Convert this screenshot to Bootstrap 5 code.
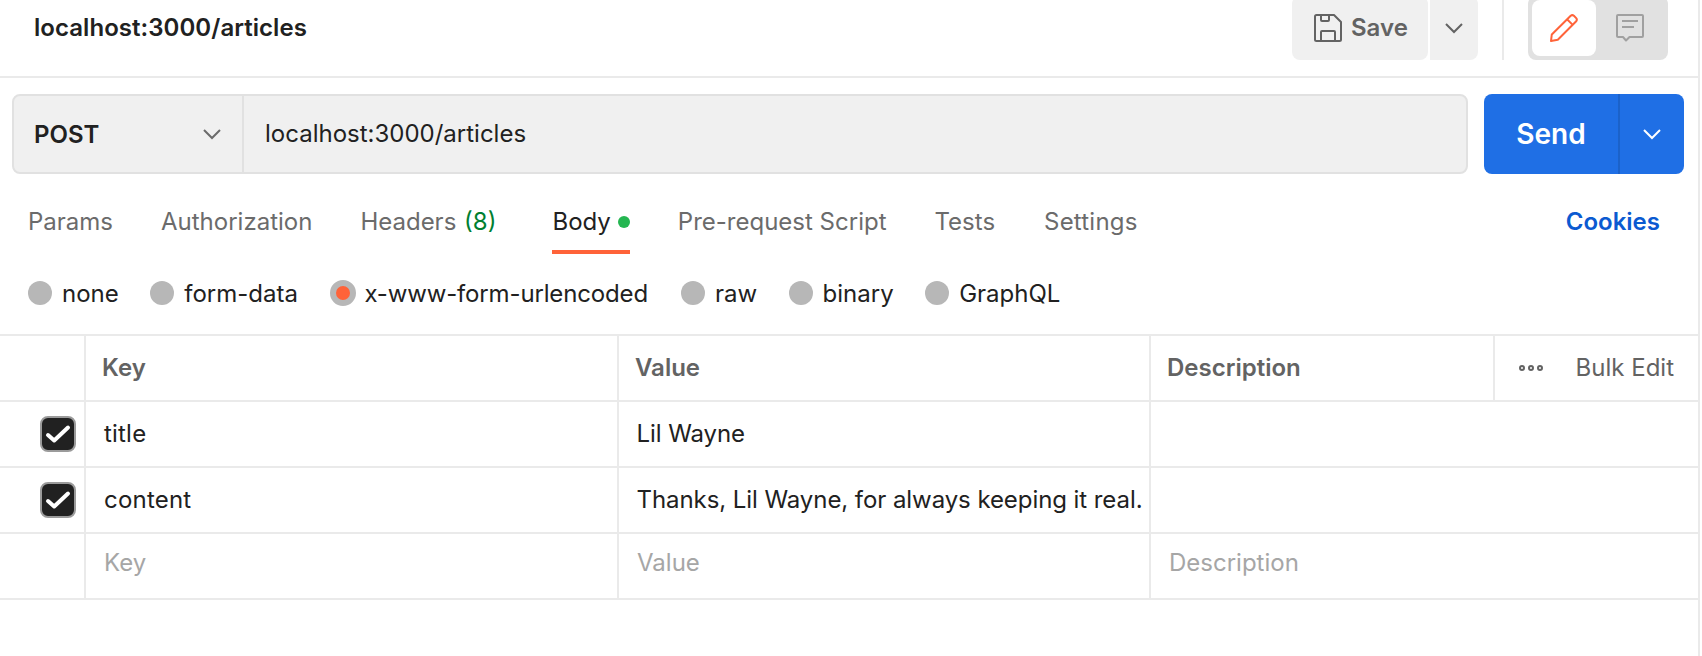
<!DOCTYPE html>
<html lang="en">
<head>
<meta charset="utf-8">
<meta name="viewport" content="width=device-width, initial-scale=1">
<title>localhost:3000/articles</title>
<link rel="stylesheet" href="https://cdn.jsdelivr.net/npm/bootstrap@5.3.0/dist/css/bootstrap.min.css">
<style>
  :root { --line: #eaeaea; --ink: #212121; --muted: #6b6b6b; --faint: #a6a6a6; --accent: #ff6339; }
  body { font-family: Inter, "Liberation Sans", sans-serif; font-size: 24px; line-height: 32px; color: var(--ink); background: #fff; overflow: hidden; }
  svg { display: block; flex: none; fill: none; }
  .pane { width: 1700px; height: 656px; border-right: 2px solid var(--line); }
  .topbar { height: 78px; border-bottom: 2px solid var(--line); padding: 0 30px 0 34px; overflow: hidden; }
  .topbar h1 { font-size: 24px; line-height: 32px; margin-top: 12px; letter-spacing: .05px; }
  .tools { height: 64px; margin-top: -4px; }
  .tool-btn { background: #f0f0f0; border: 0; border-radius: 8px; color: #636363; font-size: 24px; padding: 0; height: 64px; }
  .save-main { width: 136px; padding: 0 0 1px 22px; gap: 9px; border-radius: 8px; }
  .save-more { width: 48px; margin-left: 2px; border-radius: 0 8px 8px 0; }
  .rule { width: 2px; background: var(--line); margin: 0 24px; }
  .switch { width: 140px; background: #e1e1e1; border-radius: 8px; padding: 4px; gap: 2px; }
  .switch > span { width: 64px; height: 56px; border-radius: 8px; }
  .request { padding: 16px 14px 0 12px; gap: 16px; }
  .address { height: 80px; background: #f0f0f0; border: 2px solid #e1e1e1; border-radius: 8px; }
  .method { width: 230px; border-right: 2px solid #e1e1e1; padding: 0 21px 0 20px; }
  .method span { padding-top: 1px; }
  .url { padding: 0 0 0 21px; }
  .send { width: 200px; height: 80px; border-radius: 8px; background: #1f6fe5; color: #fff; font-size: 28px; overflow: hidden; }
  .send-main { width: 134px; }
  .send-more { border-left: 2px solid #1b62ca; }
  .tabs { padding: 32px 38px 0 28px; gap: 48px; height: 80px; color: var(--muted); }
  .tabs a { color: inherit; text-decoration: none; height: 48px; white-space: nowrap; }
  .tabs a.current { color: var(--ink); border-bottom: 4px solid var(--accent); }
  .tabs a.cookies { color: #0b5ad1; }
  .tabs .airy { letter-spacing: .2px; margin-left: 1px; }
  .count { color: #007f31; margin-left: 1px; }
  .dot { width: 12px; height: 12px; border-radius: 50%; background: #24b651; margin: 10px 0 0 7px; }
  .modes { height: 80px; padding: 0 28px 2px; gap: 31.5px; }
  .modes label { gap: 10px; white-space: nowrap; }
  .modes label.wide { gap: 8px; letter-spacing: -.15px; margin: 0 1.5px 0 1px; }
  .modes .caption { padding-top: 1px; }
  .knob { width: 24px; height: 24px; border-radius: 50%; background: #b7b7b7; }
  .knob.on { width: 26px; height: 26px; background: var(--accent); border: 6px solid #b7b7b7; }
  .params { table-layout: fixed; width: 1698px; border-collapse: separate; border-spacing: 0; border-top: 2px solid var(--line); }
  .params th, .params td { height: 66px; padding: 0 0 1px 18px; border-bottom: 2px solid var(--line); border-right: 2px solid var(--line); vertical-align: middle; white-space: nowrap; }
  .params th { color: #636363; font-weight: 600; padding-left: 16px; }
  .params th:last-child, .params td:last-child { border-right: 0; }
  .params .tick { padding: 0 8px 0 0; }
  .params .airy { letter-spacing: .2px; }
  .params .snug { letter-spacing: -.07px; padding-left: 17.5px; }
  .params .blank td { color: var(--faint); padding-bottom: 6px; }
  .check { width: 36px; height: 36px; border: 2px solid #9b9b9b; border-radius: 8px; background: var(--ink); }
</style>
</head>
<body>
<div class="pane">
  <header class="topbar d-flex justify-content-between align-items-start">
    <h1 class="fw-semibold mb-0">localhost:3000/articles</h1>
    <div class="tools d-flex">
      <button class="tool-btn save-main fw-semibold d-flex align-items-center">
        <svg width="28" height="28" viewBox="0 0 28 28" stroke="#636363" stroke-width="2" stroke-linejoin="round"><path d="M1 2.500Q1 1 2.500 1H20l7 7v17.500Q27 27 25.500 27h-23Q1 27 1 25.500zM7 1v5q0 1 1 1h6q1 0 1-1V1M7 27v-9q0-1 1-1h12q1 0 1 1v9"/></svg>
        Save
      </button>
      <button class="tool-btn save-more d-flex align-items-center justify-content-center" aria-label="More save options">
        <svg width="18" height="11" viewBox="0 0 18 11" stroke="#636363" stroke-width="2"><path d="M1 1l8 8 8-8"/></svg>
      </button>
      <div class="rule"></div>
      <div class="switch d-flex">
        <span class="bg-white d-flex align-items-center justify-content-center"><svg width="28" height="28" viewBox="0 0 28 28" stroke="#ff6339" stroke-width="2" stroke-linejoin="round"><path d="M1 27l.8-6.500L20.700 1.800q1.600-1.300 3.200 0l2.300 2.300q1.300 1.600 0 3.200L7.800 25.800zM17.300 5.500l5.400 5.400"/></svg></span>
        <span class="d-flex align-items-center justify-content-center"><svg width="28" height="28" viewBox="0 0 28 28" stroke="#a0a0a0" stroke-width="2" stroke-linejoin="round"><path d="M2 1h24q1 0 1 1v20q0 1-1 1H13.500L10 26.500 7 23H2q-1 0-1-1V2q0-1 1-1zM6 7h16M6 13h12"/></svg></span>
      </div>
    </div>
  </header>

  <section class="request d-flex">
    <div class="address d-flex flex-grow-1">
      <div class="method d-flex align-items-center justify-content-between fw-semibold"><span>POST</span>
        <svg width="18" height="11" viewBox="0 0 18 11" stroke="#6b6b6b" stroke-width="2"><path d="M1 1l8 8 8-8"/></svg>
      </div>
      <div class="url d-flex align-items-center">localhost:3000/articles</div>
    </div>
    <div class="send d-flex fw-semibold">
      <div class="send-main d-flex align-items-center justify-content-center">Send</div>
      <div class="send-more d-flex flex-grow-1 align-items-center justify-content-center">
        <svg width="18" height="11" viewBox="0 0 18 11" stroke="#fff" stroke-width="2"><path d="M1 1l8 8 8-8"/></svg>
      </div>
    </div>
  </section>

  <nav class="tabs d-flex">
    <a href="#">Params</a>
    <a href="#">Authorization</a>
    <a href="#">Headers <span class="count">(8)</span></a>
    <a href="#" class="current d-flex ms-2">Body<span class="dot"></span></a>
    <a href="#">Pre-request Script</a>
    <a href="#">Tests</a>
    <a href="#" class="airy">Settings</a>
    <a href="#" class="cookies fw-semibold ms-auto">Cookies</a>
  </nav>

  <div class="modes d-flex align-items-center">
    <label class="d-flex align-items-center"><span class="knob"></span><span class="caption">none</span></label>
    <label class="d-flex align-items-center"><span class="knob"></span><span class="caption">form-data</span></label>
    <label class="wide d-flex align-items-center"><span class="knob on"></span><span class="caption">x-www-form-urlencoded</span></label>
    <label class="d-flex align-items-center"><span class="knob"></span><span class="caption">raw</span></label>
    <label class="d-flex align-items-center"><span class="knob"></span><span class="caption">binary</span></label>
    <label class="d-flex align-items-center"><span class="knob"></span><span class="caption">GraphQL</span></label>
  </div>

  <table class="params">
    <colgroup><col style="width:86px"><col style="width:533px"><col style="width:532px"><col style="width:344px"><col></colgroup>
    <thead>
      <tr><th></th><th>Key</th><th>Value</th><th>Description</th>
        <th><div class="d-flex align-items-center fw-normal ps-2">
          <svg width="24" height="8" viewBox="0 0 24 8" stroke="#636363" stroke-width="2"><circle cx="3" cy="4" r="2"/><circle cx="12" cy="4" r="2"/><circle cx="21" cy="4" r="2"/></svg>
          <span class="ms-auto me-4">Bulk Edit</span></div></th></tr>
    </thead>
    <tbody>
      <tr><td class="tick"><div class="check ms-auto"><svg width="32" height="32" viewBox="0 0 32 32" stroke="#fff" stroke-width="4" stroke-linecap="round" stroke-linejoin="round"><path d="M6 17l6.200 5.500L26 9.500"/></svg></div></td><td class="airy">title</td><td class="snug">Lil Wayne</td><td colspan="2"></td></tr>
      <tr><td class="tick"><div class="check ms-auto"><svg width="32" height="32" viewBox="0 0 32 32" stroke="#fff" stroke-width="4" stroke-linecap="round" stroke-linejoin="round"><path d="M6 17l6.200 5.500L26 9.500"/></svg></div></td><td class="airy">content</td><td class="snug">Thanks, Lil Wayne, for always keeping it real.</td><td colspan="2"></td></tr>
      <tr class="blank"><td></td><td>Key</td><td>Value</td><td colspan="2">Description</td></tr>
    </tbody>
  </table>
</div>
<script src="https://cdn.jsdelivr.net/npm/bootstrap@5.3.0/dist/js/bootstrap.bundle.min.js"></script>
</body>
</html>
